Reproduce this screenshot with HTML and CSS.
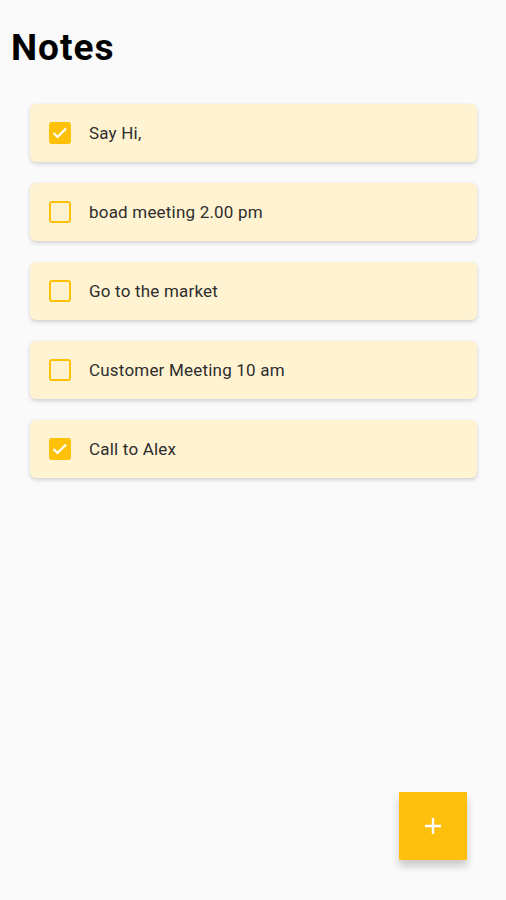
FILE: index.html
```
<!DOCTYPE html>
<html>
<head>
<meta charset="utf-8">
<link rel="stylesheet" href="styles.css">
</head>
<body>
<div class="page">
  <h1 class="title">Notes</h1>
  <div class="list">
    <div class="card"><span class="box checked"><svg viewBox="0 0 22 22" width="22" height="22"><path d="M4.5 11l4 4 8.5-8.5" fill="none" stroke="#fff" stroke-width="2.2"/></svg></span><span class="text">Say Hi,</span></div>
    <div class="card"><span class="box"></span><span class="text">boad meeting 2.00 pm</span></div>
    <div class="card"><span class="box"></span><span class="text">Go to the market</span></div>
    <div class="card"><span class="box"></span><span class="text">Customer Meeting 10 am</span></div>
    <div class="card"><span class="box checked"><svg viewBox="0 0 22 22" width="22" height="22"><path d="M4.5 11l4 4 8.5-8.5" fill="none" stroke="#fff" stroke-width="2.2"/></svg></span><span class="text">Call to Alex</span></div>
  </div>
  <button class="fab"><svg viewBox="0 0 20 20" width="20" height="20"><path d="M10 2v16M2 10h16" stroke="#fff" stroke-width="2.4"/></svg></button>
</div>
</body>
</html>
```
FILE: styles.css
```
html, body {
  margin: 0;
  padding: 0;
  background: #fafafa;
  font-family: Roboto, "Liberation Sans", sans-serif;
}
.page {
  position: relative;
  width: 506px;
  height: 900px;
  box-sizing: border-box;
  padding-top: 27px;
}
.title {
  margin: 0 0 0 11px;
  font-size: 37px;
  font-weight: 700;
  line-height: 42px;
  letter-spacing: 1px;
  color: #000;
  font-family: Roboto, "Liberation Sans", sans-serif;
}
.list {
  display: flex;
  flex-direction: column;
  gap: 21px;
  margin: 35px 29px 0 30px;
}
.card {
  height: 58px;
  background: #fff3d1;
  border-radius: 6px;
  box-shadow: 0 2px 4px rgba(0,0,0,0.16), 0 0 1px rgba(0,0,0,0.08);
  display: flex;
  align-items: center;
  padding-left: 19px;
}
.box {
  width: 22px;
  height: 22px;
  box-sizing: border-box;
  border: 2px solid #ffc107;
  border-radius: 3px;
  display: flex;
  align-items: center;
  justify-content: center;
  flex: none;
}
.box.checked {
  background: #ffc107;
  border: none;
}
.text {
  margin-left: 18px;
  font-size: 17px;
  letter-spacing: 0.2px;
  color: #2e2e2e;
}
.fab {
  position: absolute;
  left: 399px;
  top: 792px;
  width: 68px;
  height: 68px;
  border: none;
  padding: 0;
  background: #ffbf0d;
  box-shadow: 0 6px 8px rgba(0,0,0,0.2);
  display: flex;
  align-items: center;
  justify-content: center;
}
```
